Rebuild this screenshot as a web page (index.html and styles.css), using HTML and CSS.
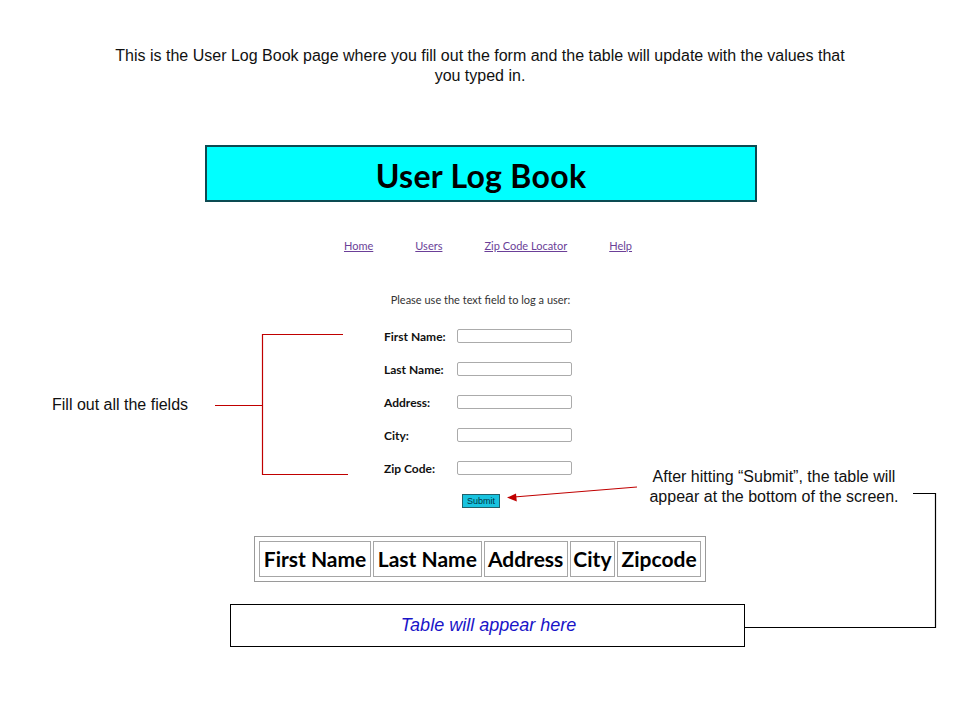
FILE: index.html
```html
<!DOCTYPE html>
<html lang="en">
<head>
<meta charset="utf-8">
<title>User Log Book</title>
<link rel="stylesheet" href="styles.css">
</head>
<body>
<div class="slide">
  <p class="caption">This is the User Log Book page where you fill out the form and the table will update with the values that you typed in.</p>

  <header class="banner"><h1>User Log Book</h1></header>

  <nav class="nav">
    <a href="#">Home</a>
    <a href="#">Users</a>
    <a href="#">Zip Code Locator</a>
    <a href="#">Help</a>
  </nav>

  <p class="intro">Please use the text field to log a user:</p>

  <form class="form">
    <div class="row"><label>First Name:</label><input type="text"></div>
    <div class="row"><label>Last Name:</label><input type="text"></div>
    <div class="row"><label>Address:</label><input type="text"></div>
    <div class="row"><label>City:</label><input type="text"></div>
    <div class="row"><label>Zip Code:</label><input type="text"></div>
    <div class="submit-row"><button type="button" class="submit">Submit</button></div>
  </form>

  <table class="log">
    <tr><th>First Name</th><th>Last Name</th><th>Address</th><th>City</th><th>Zipcode</th></tr>
  </table>

  <div class="placeholder">Table will appear here</div>

  <p class="note note-left">Fill out all the fields</p>
  <p class="note note-right">After hitting “Submit”, the table will appear at the bottom of the screen.</p>

  <svg class="overlay" width="960" height="720" viewBox="0 0 960 720">
    <g stroke="#c00000" stroke-width="1.2" fill="none">
      <path d="M343 334.5 H262.5 V474.5 H348"/>
      <path d="M215 405.5 H262.5"/>
      <path d="M637 487 L514 497"/>
    </g>
    <path d="M507 497.6 L516 493.5 L516.8 501.5 Z" fill="#c00000"/>
    <path d="M745 627.5 H935.5 V493.5 H913" stroke="#000" stroke-width="1.2" fill="none"/>
  </svg>
</div>
</body>
</html>
```
FILE: styles.css
```css
* { box-sizing: border-box; }
html, body { margin: 0; padding: 0; background: #fff; }
.slide {
  position: relative;
  width: 960px;
  height: 720px;
  overflow: hidden;
  display: flex;
  flex-direction: column;
  font-family: Lato, "Open Sans", sans-serif;
}
.caption {
  margin: 46px auto 0;
  width: 740px;
  font-family: "Liberation Sans", Arial, sans-serif;
  font-size: 16px;
  line-height: 20px;
  text-align: center;
  color: #111;
}
.banner {
  margin: 59px 0 0 205px;
  width: 552px;
  height: 57px;
  background: #00ffff;
  border: 2px solid #0c4b52;
  display: flex;
  align-items: center;
  justify-content: center;
}
.banner h1 {
  margin: 4px 0 0;
  font-size: 32px;
  font-weight: 700;
  color: #000;
  letter-spacing: 0.3px;
}
.nav {
  margin-top: 37px;
  display: flex;
  justify-content: center;
  gap: 42px;
  padding-left: 16px;
  font-size: 11px;
  line-height: 14px;
}
.nav a { color: #6b3f98; text-decoration: underline; }
.intro {
  margin: 40px 0 0;
  text-align: center;
  font-size: 11px;
  line-height: 14px;
  color: #333;
  padding-left: 1px;
}
.form {
  margin: 22px 0 0 384px;
  display: flex;
  flex-direction: column;
  gap: 19px;
}
.row { display: flex; align-items: center; height: 14px; }
.row label {
  width: 73px;
  font-size: 12px;
  font-weight: 700;
  color: #111;
}
.row input {
  width: 115px;
  height: 14px;
  margin: 0;
  padding: 0;
  border: 1px solid #ababab;
  border-radius: 2px;
  background: #fff;
}
.submit-row {
  margin: 0 0 0 78px;
  display: flex;
}
.submit {
  width: 38px;
  height: 14px;
  padding: 0;
  margin: 0;
  background: #18c3df;
  border: 1px solid #21606a;
  font-family: "Liberation Sans", Arial, sans-serif;
  font-size: 9px;
  line-height: 12px;
  color: #003344;
}
.log {
  margin: 28px 0 0 254px;
  width: 452px;
  border: 1px solid #9a9a9a;
  border-spacing: 2px;
  padding: 2px;
}
.log th {
  border: 1px solid #a6a6a6;
  padding: 3px 2px;
  font-size: 21px;
  line-height: 28px;
  font-weight: 700;
  color: #000;
  white-space: nowrap;
}
.placeholder {
  margin: 22px 0 0 230px;
  width: 515px;
  height: 43px;
  border: 1px solid #000;
  display: flex;
  align-items: center;
  justify-content: center;
  font-family: "Liberation Sans", Arial, sans-serif;
  font-style: italic;
  font-size: 18px;
  color: #1a14c8;
  padding-left: 2px;
}
.note {
  position: absolute;
  margin: 0;
  font-family: "Liberation Sans", Arial, sans-serif;
  font-size: 16px;
  line-height: 20px;
  color: #111;
}
.note-left { left: 52px; top: 395px; }
.note-right { left: 638px; top: 467px; width: 272px; text-align: center; }
.overlay { position: absolute; left: 0; top: 0; pointer-events: none; }
```
